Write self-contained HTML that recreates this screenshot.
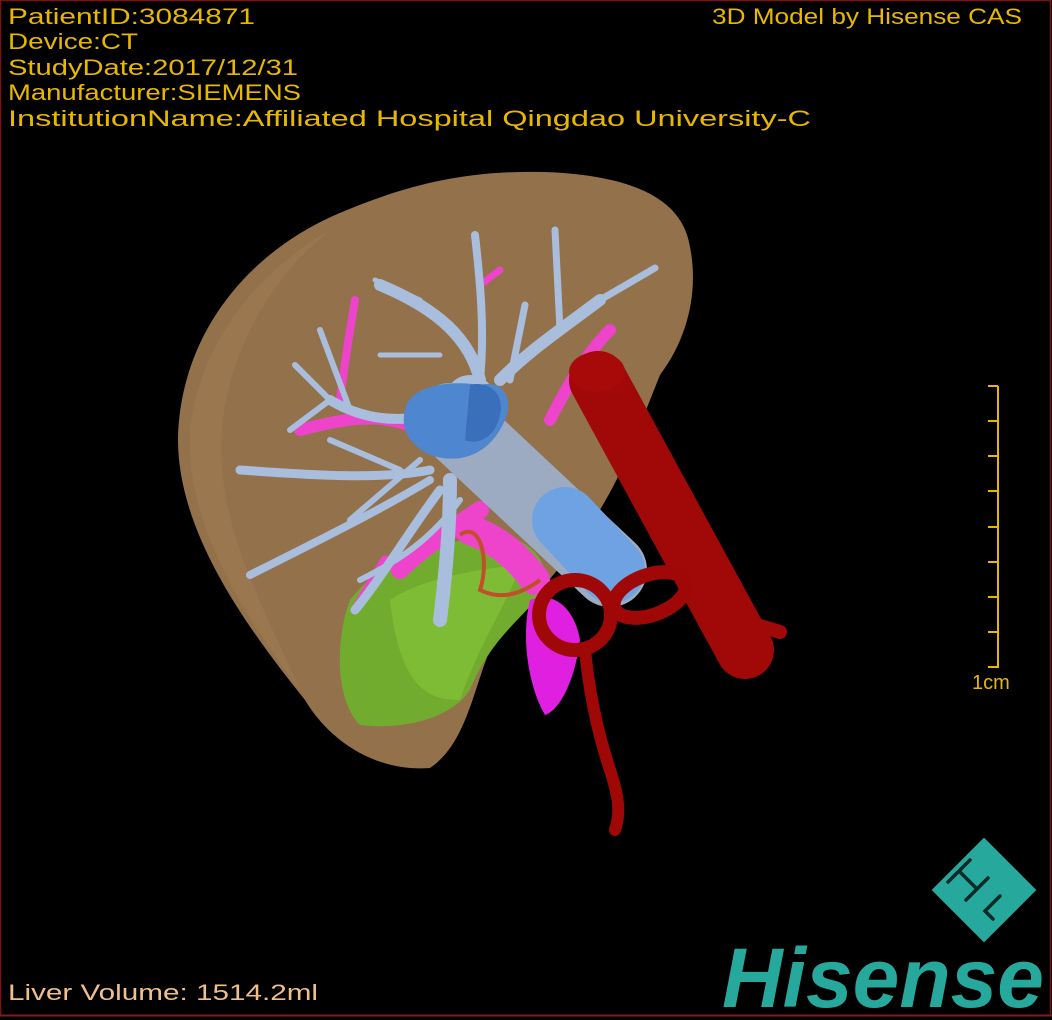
<!DOCTYPE html>
<html><head><meta charset="utf-8"><style>
html,body{margin:0;padding:0;background:#000;}
svg{display:block;}
text{font-family:"Liberation Sans",sans-serif;}
</style></head><body>
<svg width="1052" height="1020" viewBox="0 0 1052 1020" xmlns="http://www.w3.org/2000/svg">
<rect x="0" y="0" width="1052" height="1020" fill="#000"/>
<rect x="0.5" y="0.5" width="1050" height="1015" fill="none" stroke="#7a1414" stroke-width="1.5"/>
<line x1="0" y1="1015.5" x2="1052" y2="1015.5" stroke="#8b1818" stroke-width="2"/>

<!-- liver -->
<path d="M430 768 C380 772 332 745 305 700 C245 625 176 530 178 435 C182 335 245 255 335 215 C405 185 465 170 545 172 C625 175 676 195 688 238 C700 285 690 335 660 375 L630 450 C600 525 545 590 500 630 C475 670 472 740 430 768 Z" fill="#93714b"/>
<path d="M330 230 C260 270 200 340 190 430 C185 520 240 610 300 690 C260 600 215 520 222 430 C230 340 280 270 330 230Z" fill="#a07c54" opacity="0.6"/>
<!-- green -->
<path d="M350 600 C380 560 440 540 500 535 C530 540 550 560 545 590 C520 620 490 640 470 690 C450 720 400 730 360 725 C335 700 335 640 350 600Z" fill="#72ac2e"/>
<path d="M390 600 C420 580 470 570 520 565 C510 600 480 640 460 700 C430 700 400 690 390 600Z" fill="#82c038" opacity="0.8"/>

<!-- magenta branches -->
<g stroke="#ee44cc" stroke-linecap="round" fill="none">
<path d="M300 430 C340 420 380 410 420 430" stroke-width="12"/>
<path d="M355 300 C350 330 345 360 340 400" stroke-width="8"/>
<path d="M480 285 L500 270" stroke-width="7"/>
<path d="M470 530 C500 540 520 560 535 580" stroke-width="30"/>
<path d="M400 570 C420 550 450 530 480 510" stroke-width="18"/>
<path d="M550 420 C570 380 590 350 610 330" stroke-width="12"/>
<path d="M355 610 L385 560" stroke-width="9"/>
</g>
<path d="M530 600 C555 590 575 610 580 640 C575 680 560 710 545 715 C530 690 520 640 530 600Z" fill="#e020e0"/>

<!-- light blue branches -->
<g stroke="#a8bedc" stroke-linecap="round" fill="none">
<path d="M470 400 C430 420 380 430 330 400" stroke-width="10"/>
<path d="M330 400 L295 365 M330 400 L290 430 M350 410 L320 330" stroke-width="6"/>
<path d="M430 470 C380 480 310 475 240 470" stroke-width="9"/>
<path d="M430 480 C380 510 320 540 250 575" stroke-width="8"/>
<path d="M440 490 C410 530 380 580 355 610" stroke-width="9"/>
<path d="M450 480 C450 530 445 580 440 620" stroke-width="14"/>
<path d="M460 500 C430 540 400 560 360 580" stroke-width="6"/>
<path d="M480 380 C470 340 440 310 380 285" stroke-width="12"/>
<path d="M480 380 C485 330 480 280 475 235" stroke-width="8"/>
<path d="M500 380 C530 350 560 330 600 300" stroke-width="12"/>
<path d="M600 300 L655 268 M560 330 L555 230 M510 380 L525 305" stroke-width="7"/>
<path d="M420 300 L375 280 M380 355 L440 355" stroke-width="5"/>
<path d="M420 460 L350 520 M400 470 L330 440" stroke-width="6"/>
<path d="M470 400 L460 420" stroke-width="50"/>
</g>
<!-- cylinder -->
<path d="M450 420 L610 570" stroke="#9cabc2" stroke-width="74" stroke-linecap="round"/>
<path d="M565 520 L612 570" stroke="#6ea2e2" stroke-width="66" stroke-linecap="round"/>
<path d="M405 410 C410 385 450 380 480 385 C500 380 515 395 505 420 C490 455 460 465 430 455 C410 445 400 430 405 410Z" fill="#4f86d0"/>
<path d="M470 385 C490 380 505 395 500 415 C495 440 475 445 465 440Z" fill="#3a70bb"/>

<!-- orange small vessel -->
<path d="M460 535 C480 520 490 560 480 590 C500 600 520 595 540 580" stroke="#c0502a" stroke-width="4" fill="none"/>

<!-- red aorta -->
<path d="M598 380 L745 650" stroke="#a10808" stroke-width="58" stroke-linecap="round"/>
<ellipse cx="597" cy="372" rx="28" ry="20" fill="#a80a0a"/>
<path d="M740 620 L780 632" stroke="#a10808" stroke-width="14" stroke-linecap="round"/>
<g stroke="#a00808" fill="none" stroke-width="14">
<ellipse cx="575" cy="615" rx="36" ry="35"/>
<ellipse cx="650" cy="595" rx="38" ry="20" transform="rotate(-20 650 595)"/>
</g>
<path d="M585 650 C590 700 600 740 610 770 C620 800 620 815 615 830" stroke="#a00808" stroke-width="12" fill="none" stroke-linecap="round"/>

<!-- scale bar -->
<g stroke="#e8b800" stroke-width="2">
<line x1="998" y1="386" x2="998" y2="668"/>
<line x1="988" y1="386" x2="998" y2="386"/><line x1="988" y1="421" x2="998" y2="421"/>
<line x1="988" y1="456" x2="998" y2="456"/><line x1="988" y1="491" x2="998" y2="491"/>
<line x1="988" y1="527" x2="998" y2="527"/><line x1="988" y1="562" x2="998" y2="562"/>
<line x1="988" y1="597" x2="998" y2="597"/><line x1="988" y1="632" x2="998" y2="632"/>
<line x1="988" y1="667" x2="998" y2="667"/>
</g>
<text x="972" y="689" font-size="20" fill="#e8b800">1cm</text>

<!-- header text -->
<g fill="#e8b800" font-size="22">
<text x="8" y="24" textLength="247" lengthAdjust="spacingAndGlyphs">PatientID:3084871</text>
<text x="8" y="49" textLength="130" lengthAdjust="spacingAndGlyphs">Device:CT</text>
<text x="8" y="75" textLength="290" lengthAdjust="spacingAndGlyphs">StudyDate:2017/12/31</text>
<text x="8" y="100" textLength="293" lengthAdjust="spacingAndGlyphs">Manufacturer:SIEMENS</text>
<text x="8" y="126" textLength="803" lengthAdjust="spacingAndGlyphs">InstitutionName:Affiliated Hospital Qingdao University-C</text>
<text x="712" y="24" textLength="310" lengthAdjust="spacingAndGlyphs">3D Model by Hisense CAS</text>
</g>
<text x="8" y="1000" font-size="22" fill="#f0c08a" textLength="310" lengthAdjust="spacingAndGlyphs">Liver Volume: 1514.2ml</text>

<!-- logo -->
<g transform="rotate(45 984 890)">
<rect x="947" y="853" width="74" height="74" fill="#26a89c"/>
</g>
<g stroke="#0a2a28" stroke-width="3.5" fill="none" stroke-linecap="round">
<path d="M970 860 L948 882 M988 878 L966 900 M959 871 L977 889"/>
<path d="M1000 896 L985 911 L993 919"/>
</g>
<text x="722" y="1007" font-size="84" font-weight="bold" fill="#26a89c" textLength="322" lengthAdjust="spacingAndGlyphs" style="font-family:'Liberation Sans Narrow','Liberation Sans',sans-serif;font-style:italic">Hisense</text>
</svg>
</body></html>
